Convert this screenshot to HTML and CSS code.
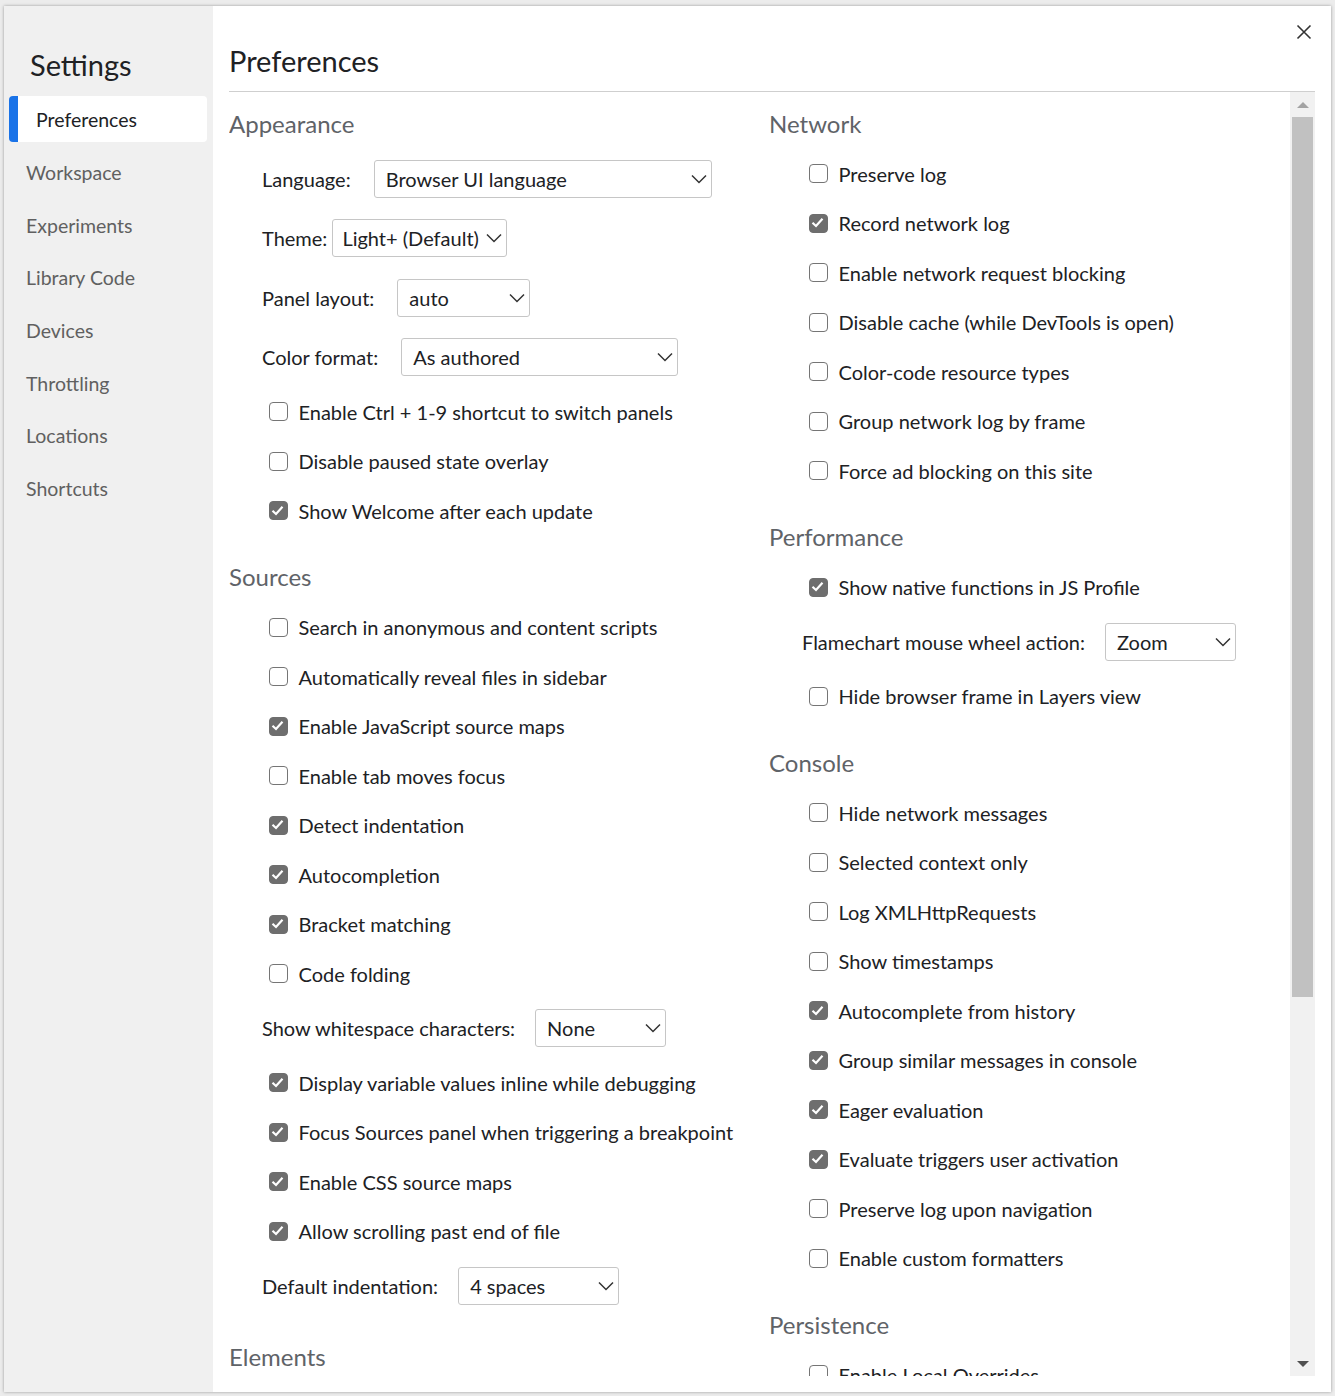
FILE: index.html
```html
<!DOCTYPE html>
<html lang="en">
<head>
<meta charset="utf-8">
<title>Settings</title>
<link rel="stylesheet" href="styles.css">
</head>
<body>
<div class="dialog">
  <aside class="sidebar">
    <div class="sidebar-title">Settings</div>
    <nav class="nav">
      <div class="nav-item selected">Preferences</div>
      <div class="nav-item">Workspace</div>
      <div class="nav-item">Experiments</div>
      <div class="nav-item">Library Code</div>
      <div class="nav-item">Devices</div>
      <div class="nav-item">Throttling</div>
      <div class="nav-item">Locations</div>
      <div class="nav-item">Shortcuts</div>
    </nav>
  </aside>
  <main class="main">
    <div class="close" aria-label="Close">
      <svg width="18" height="18" viewBox="0 0 18 18"><path d="M2.5 2.5 L15.5 15.5 M15.5 2.5 L2.5 15.5" stroke="#333" stroke-width="1.6" fill="none"/></svg>
    </div>
    <header class="header"><h1 class="page-title">Preferences</h1></header>
    <div class="scroller">
      <div class="content">
        <div class="column">
          <section class="section">
            <h2 class="section-title">Appearance</h2>
            <div class="row select-row"><span class="label">Language:</span><div class="select w-lang"><span>Browser UI language</span><svg class="chev" width="16" height="10" viewBox="0 0 16 10"><path d="M1 1.5 L8 8.5 L15 1.5" stroke="#333" stroke-width="1.5" fill="none"/></svg></div></div>
            <div class="row select-row tight"><span class="label">Theme:</span><div class="select w-theme"><span>Light+ (Default)</span><svg class="chev" width="16" height="10" viewBox="0 0 16 10"><path d="M1 1.5 L8 8.5 L15 1.5" stroke="#333" stroke-width="1.5" fill="none"/></svg></div></div>
            <div class="row select-row"><span class="label">Panel layout:</span><div class="select w-panel"><span>auto</span><svg class="chev" width="16" height="10" viewBox="0 0 16 10"><path d="M1 1.5 L8 8.5 L15 1.5" stroke="#333" stroke-width="1.5" fill="none"/></svg></div></div>
            <div class="row select-row"><span class="label">Color format:</span><div class="select w-color"><span>As authored</span><svg class="chev" width="16" height="10" viewBox="0 0 16 10"><path d="M1 1.5 L8 8.5 L15 1.5" stroke="#333" stroke-width="1.5" fill="none"/></svg></div></div>
            <div class="row cb-row"><span class="cb"></span><span>Enable Ctrl + 1-9 shortcut to switch panels</span></div>
            <div class="row cb-row"><span class="cb"></span><span>Disable paused state overlay</span></div>
            <div class="row cb-row"><span class="cb checked"><svg width="19" height="19" viewBox="0 0 19 19"><path d="M4.5 9.8 L8 13 L14.5 5.8" stroke="#fff" stroke-width="2.2" fill="none"/></svg></span><span>Show Welcome after each update</span></div>
          </section>
          <section class="section">
            <h2 class="section-title">Sources</h2>
            <div class="row cb-row"><span class="cb"></span><span>Search in anonymous and content scripts</span></div>
            <div class="row cb-row"><span class="cb"></span><span>Automatically reveal files in sidebar</span></div>
            <div class="row cb-row"><span class="cb checked"><svg width="19" height="19" viewBox="0 0 19 19"><path d="M4.5 9.8 L8 13 L14.5 5.8" stroke="#fff" stroke-width="2.2" fill="none"/></svg></span><span>Enable JavaScript source maps</span></div>
            <div class="row cb-row"><span class="cb"></span><span>Enable tab moves focus</span></div>
            <div class="row cb-row"><span class="cb checked"><svg width="19" height="19" viewBox="0 0 19 19"><path d="M4.5 9.8 L8 13 L14.5 5.8" stroke="#fff" stroke-width="2.2" fill="none"/></svg></span><span>Detect indentation</span></div>
            <div class="row cb-row"><span class="cb checked"><svg width="19" height="19" viewBox="0 0 19 19"><path d="M4.5 9.8 L8 13 L14.5 5.8" stroke="#fff" stroke-width="2.2" fill="none"/></svg></span><span>Autocompletion</span></div>
            <div class="row cb-row"><span class="cb checked"><svg width="19" height="19" viewBox="0 0 19 19"><path d="M4.5 9.8 L8 13 L14.5 5.8" stroke="#fff" stroke-width="2.2" fill="none"/></svg></span><span>Bracket matching</span></div>
            <div class="row cb-row"><span class="cb"></span><span>Code folding</span></div>
            <div class="row select-row long"><span class="label">Show whitespace characters:</span><div class="select w-ws"><span>None</span><svg class="chev" width="16" height="10" viewBox="0 0 16 10"><path d="M1 1.5 L8 8.5 L15 1.5" stroke="#333" stroke-width="1.5" fill="none"/></svg></div></div>
            <div class="row cb-row"><span class="cb checked"><svg width="19" height="19" viewBox="0 0 19 19"><path d="M4.5 9.8 L8 13 L14.5 5.8" stroke="#fff" stroke-width="2.2" fill="none"/></svg></span><span>Display variable values inline while debugging</span></div>
            <div class="row cb-row"><span class="cb checked"><svg width="19" height="19" viewBox="0 0 19 19"><path d="M4.5 9.8 L8 13 L14.5 5.8" stroke="#fff" stroke-width="2.2" fill="none"/></svg></span><span>Focus Sources panel when triggering a breakpoint</span></div>
            <div class="row cb-row"><span class="cb checked"><svg width="19" height="19" viewBox="0 0 19 19"><path d="M4.5 9.8 L8 13 L14.5 5.8" stroke="#fff" stroke-width="2.2" fill="none"/></svg></span><span>Enable CSS source maps</span></div>
            <div class="row cb-row"><span class="cb checked"><svg width="19" height="19" viewBox="0 0 19 19"><path d="M4.5 9.8 L8 13 L14.5 5.8" stroke="#fff" stroke-width="2.2" fill="none"/></svg></span><span>Allow scrolling past end of file</span></div>
            <div class="row select-row long"><span class="label">Default indentation:</span><div class="select w-indent"><span>4 spaces</span><svg class="chev" width="16" height="10" viewBox="0 0 16 10"><path d="M1 1.5 L8 8.5 L15 1.5" stroke="#333" stroke-width="1.5" fill="none"/></svg></div></div>
          </section>
          <section class="section">
            <h2 class="section-title">Elements</h2>
          </section>
        </div>
        <div class="column">
          <section class="section">
            <h2 class="section-title">Network</h2>
            <div class="row cb-row"><span class="cb"></span><span>Preserve log</span></div>
            <div class="row cb-row"><span class="cb checked"><svg width="19" height="19" viewBox="0 0 19 19"><path d="M4.5 9.8 L8 13 L14.5 5.8" stroke="#fff" stroke-width="2.2" fill="none"/></svg></span><span>Record network log</span></div>
            <div class="row cb-row"><span class="cb"></span><span>Enable network request blocking</span></div>
            <div class="row cb-row"><span class="cb"></span><span>Disable cache (while DevTools is open)</span></div>
            <div class="row cb-row"><span class="cb"></span><span>Color-code resource types</span></div>
            <div class="row cb-row"><span class="cb"></span><span>Group network log by frame</span></div>
            <div class="row cb-row"><span class="cb"></span><span>Force ad blocking on this site</span></div>
          </section>
          <section class="section">
            <h2 class="section-title">Performance</h2>
            <div class="row cb-row"><span class="cb checked"><svg width="19" height="19" viewBox="0 0 19 19"><path d="M4.5 9.8 L8 13 L14.5 5.8" stroke="#fff" stroke-width="2.2" fill="none"/></svg></span><span>Show native functions in JS Profile</span></div>
            <div class="row select-row long"><span class="label">Flamechart mouse wheel action:</span><div class="select w-flame"><span>Zoom</span><svg class="chev" width="16" height="10" viewBox="0 0 16 10"><path d="M1 1.5 L8 8.5 L15 1.5" stroke="#333" stroke-width="1.5" fill="none"/></svg></div></div>
            <div class="row cb-row"><span class="cb"></span><span>Hide browser frame in Layers view</span></div>
          </section>
          <section class="section">
            <h2 class="section-title">Console</h2>
            <div class="row cb-row"><span class="cb"></span><span>Hide network messages</span></div>
            <div class="row cb-row"><span class="cb"></span><span>Selected context only</span></div>
            <div class="row cb-row"><span class="cb"></span><span>Log XMLHttpRequests</span></div>
            <div class="row cb-row"><span class="cb"></span><span>Show timestamps</span></div>
            <div class="row cb-row"><span class="cb checked"><svg width="19" height="19" viewBox="0 0 19 19"><path d="M4.5 9.8 L8 13 L14.5 5.8" stroke="#fff" stroke-width="2.2" fill="none"/></svg></span><span>Autocomplete from history</span></div>
            <div class="row cb-row"><span class="cb checked"><svg width="19" height="19" viewBox="0 0 19 19"><path d="M4.5 9.8 L8 13 L14.5 5.8" stroke="#fff" stroke-width="2.2" fill="none"/></svg></span><span>Group similar messages in console</span></div>
            <div class="row cb-row"><span class="cb checked"><svg width="19" height="19" viewBox="0 0 19 19"><path d="M4.5 9.8 L8 13 L14.5 5.8" stroke="#fff" stroke-width="2.2" fill="none"/></svg></span><span>Eager evaluation</span></div>
            <div class="row cb-row"><span class="cb checked"><svg width="19" height="19" viewBox="0 0 19 19"><path d="M4.5 9.8 L8 13 L14.5 5.8" stroke="#fff" stroke-width="2.2" fill="none"/></svg></span><span>Evaluate triggers user activation</span></div>
            <div class="row cb-row"><span class="cb"></span><span>Preserve log upon navigation</span></div>
            <div class="row cb-row"><span class="cb"></span><span>Enable custom formatters</span></div>
          </section>
          <section class="section">
            <h2 class="section-title">Persistence</h2>
            <div class="row cb-row"><span class="cb"></span><span>Enable Local Overrides</span></div>
          </section>
        </div>
      </div>
      <div class="scrollbar">
        <div class="sb-btn"><span class="arrow-up"></span></div>
        <div class="sb-thumb"></div>
        <div class="sb-track"></div>
        <div class="sb-btn"><span class="arrow-down"></span></div>
      </div>
    </div>
  </main>
</div>
</body>
</html>
```
FILE: styles.css
```css
* { box-sizing: border-box; }
html, body { margin: 0; padding: 0; }
body {
  background: #ececec;
  font-family: "Lato", "Noto Sans", sans-serif;
  color: #202124;
  width: 1335px;
  height: 1396px;
  overflow: hidden;
  padding: 6px 0 0 4px;
}
.dialog {
  display: flex;
  width: 1327px;
  height: 1386px;
  background: #fff;
  box-shadow: 0 0 3px rgba(0,0,0,0.35);
}
.sidebar {
  width: 209px;
  flex: none;
  background: #f0f0f0;
  padding-top: 41px;
}
.sidebar-title {
  font-size: 29px;
  line-height: 36px;
  padding-left: 26px;
  margin-bottom: 13px;
  color: #202124;
}
.nav { display: flex; flex-direction: column; gap: 6.6px; padding-left: 5px; }
.nav-item {
  width: 198px;
  height: 46px;
  display: flex;
  align-items: center;
  padding-left: 17px;
  font-size: 19.5px;
  color: #606060;
  border-radius: 3px;
}
.nav-item.selected {
  background: #fff;
  color: #202124;
  border-left: 9px solid #1a73e8;
  padding-left: 18px;
  border-radius: 4px;
  margin-bottom: 1.2px;
}
.main {
  flex: 1;
  position: relative;
  display: flex;
  flex-direction: column;
  padding: 0 16px 16px 16px;
  min-width: 0;
}
.close {
  position: absolute;
  top: 17px;
  right: 18px;
  width: 18px;
  height: 18px;
}
.close svg { display: block; }
.header {
  padding-top: 37px;
  padding-bottom: 12px;
  border-bottom: 1px solid #cfcfcf;
}
.page-title {
  margin: 0;
  font-size: 29px;
  line-height: 36px;
  font-weight: normal;
  color: #202124;
}
.scroller {
  flex: 1;
  display: flex;
  min-height: 0;
}
.content {
  flex: 1;
  overflow: hidden;
  display: grid;
  grid-template-columns: 540px 1fr;
  align-items: start;
  padding-top: 7.25px;
}
.column { display: flex; flex-direction: column; }
.section { margin-bottom: 17.5px; }
.section-title {
  margin: 0;
  height: 49.5px;
  display: flex;
  align-items: center;
  padding-bottom: 2px;
  font-size: 24px;
  font-weight: normal;
  color: #5f6368;
}
.row {
  display: flex;
  align-items: center;
  font-size: 20px;
  white-space: nowrap;
}
.cb-row {
  height: 49.5px;
  padding-left: 39.5px;
  gap: 11px;
}
.select-row {
  height: 59.5px;
  padding-left: 33px;
  gap: 23px;
}
.select-row.tight { gap: 5px; }
.select-row.long { gap: 20px; }
.cb {
  width: 19px;
  height: 19px;
  flex: none;
  border: 1.5px solid #757575;
  border-radius: 4px;
  background: #fff;
  position: relative;
}
.cb.checked { background: #6e6e6e; border-color: #6e6e6e; }
.cb svg { position: absolute; left: -1.5px; top: -1.5px; }
.select {
  height: 38px;
  border: 1px solid #c6c6c6;
  border-radius: 3px;
  display: flex;
  align-items: center;
  justify-content: space-between;
  padding: 0 4px 0 11px;
  background: #fff;
  color: #202124;
}
.w-theme { padding-left: 9px; }
.chev { flex: none; }
.w-lang { width: 338px; }
.w-theme { width: 175px; }
.w-panel { width: 133px; }
.w-color { width: 277px; }
.w-ws { width: 131px; }
.w-indent { width: 161px; }
.w-flame { width: 131px; }
.scrollbar {
  width: 25px;
  flex: none;
  background: #f1f1f1;
  display: flex;
  flex-direction: column;
}
.sb-btn {
  height: 25px;
  display: flex;
  align-items: center;
  justify-content: center;
  flex: none;
}
.sb-thumb {
  height: 880px;
  margin: 0 2px;
  background: #c1c1c1;
  flex: none;
}
.sb-track { flex: 1; }
.arrow-up {
  width: 0; height: 0;
  border-left: 6px solid transparent;
  border-right: 6px solid transparent;
  border-bottom: 6px solid #a3a3a3;
}
.arrow-down {
  width: 0; height: 0;
  border-left: 6px solid transparent;
  border-right: 6px solid transparent;
  border-top: 6px solid #505050;
}
```
